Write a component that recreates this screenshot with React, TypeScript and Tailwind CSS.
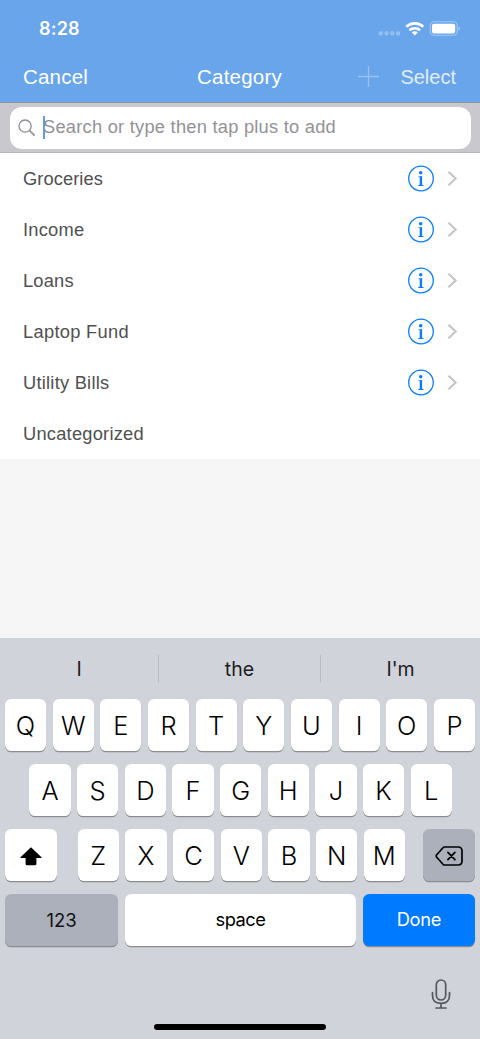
import React from "react";

const helv = "font-['Liberation_Sans',Arial,sans-serif]";
const sf = "font-['Inter',sans-serif]";

const categories = [
  { name: "Groceries", spacing: "tracking-[0.08px]", detail: true },
  { name: "Income", spacing: "tracking-[0.22px]", detail: true },
  { name: "Loans", spacing: "tracking-[0.2px]", detail: true },
  { name: "Laptop Fund", spacing: "tracking-[0.3px]", detail: true },
  { name: "Utility Bills", spacing: "tracking-[0.24px]", detail: true },
  { name: "Uncategorized", spacing: "tracking-[0.23px]", detail: false },
];

function StatusIcons() {
  return (
    <svg width="84" height="18" viewBox="378 20 84 18" fill="none">
      <g fill="#fff" fillOpacity="0.28">
        <rect x="378.6" y="31.2" width="4.2" height="4.2" rx="1.3" />
        <rect x="384.4" y="31.2" width="4.2" height="4.2" rx="1.3" />
        <rect x="390.2" y="31.2" width="4.2" height="4.2" rx="1.3" />
        <rect x="396" y="31.2" width="4.2" height="4.2" rx="1.3" />
      </g>
      <path d="M406.3 26.8A12.3 12.3 0 0 1 423.3 26.8" stroke="#fff" strokeWidth="2.7" />
      <path d="M409.5 30.3A7.8 7.8 0 0 1 420.1 30.3" stroke="#fff" strokeWidth="2.6" />
      <path d="M414.8 35.4L411.8 32.4A4.2 4.2 0 0 1 417.8 32.4Z" fill="#fff" />
      <rect x="430.3" y="21.8" width="26.9" height="13.4" rx="3.8" stroke="#fff" strokeOpacity="0.4" strokeWidth="1.1" />
      <rect x="432" y="23.7" width="23.2" height="9.9" rx="2" fill="#fff" />
      <path d="M458.6 26.5Q461.6 28.5 458.6 30.7Z" fill="#fff" fillOpacity="0.45" />
    </svg>
  );
}

function InfoIcon() {
  return (
    <svg width="28" height="27" viewBox="0 0.5 28 27" fill="none">
      <circle cx="14" cy="14" r="12.3" stroke="#087dff" strokeWidth="1.3" />
      <circle cx="13.7" cy="8.2" r="1.75" fill="#087dff" />
      <path d="M11.3 11.9L15.1 11.4V20.2L16.6 20.7V21.4H11.2V20.7L12.7 20.2V12.8L11.3 12.6Z" fill="#087dff" />
    </svg>
  );
}

type KeyProps = {
  children: React.ReactNode;
  size?: string;
  color?: string;
  text?: string;
};

function Key({
  children,
  size = "w-[41.2px]",
  color = "bg-white text-black",
  text = "pt-[2px] text-[25.5px] font-[350]",
}: KeyProps) {
  return (
    <button
      className={`flex h-[52px] shrink-0 items-center justify-center rounded-[6.4px] shadow-[0_1.3px_0_#8b8d91] ${size} ${color} ${text}`}
    >
      {children}
    </button>
  );
}

function Letters({ row }: { row: string }) {
  return (
    <div className="flex gap-[6.47px]">
      {row.split("").map((c) => (
        <Key key={c}>{c}</Key>
      ))}
    </div>
  );
}

export default function App() {
  return (
    <div className={`flex h-[1039px] w-[480px] flex-col overflow-hidden bg-[#f6f6f6] ${helv}`}>
      <header className="h-[103px] shrink-0 border-b border-[#8f9199] bg-[#69a5eb] text-white">
        <div className="flex h-[52px] items-start justify-between pr-[18px] pl-[39px]">
          <span className={`pt-[15px] text-[18px] leading-[28px] font-semibold tracking-[0.2px] ${sf}`}>8:28</span>
          <div className="pt-5">
            <StatusIcons />
          </div>
        </div>
        <div className="grid h-[50px] grid-cols-[1fr_auto_1fr] items-center px-[23px] text-[20.5px]">
          <button className="text-left tracking-[0.2px]">Cancel</button>
          <h1 className="-ml-px tracking-[0.2px]">Category</h1>
          <div className="flex items-center justify-end gap-[21px] pr-px">
            <svg className="-mt-px" width="21" height="21" viewBox="0 0 21 21" stroke="#fff" strokeOpacity="0.32" strokeWidth="1.3">
              <path d="M10.5 0V21M0 10.5H21" />
            </svg>
            <button className="text-[20px] text-white/80">Select</button>
          </div>
        </div>
      </header>

      <div className="h-[50px] shrink-0 border-b border-[#b7b7bb] bg-[#c9c8ce] px-[9.5px] pt-1">
        <div className="flex h-[41.5px] items-center rounded-[12px] bg-white pl-[8.5px]">
          <svg width="18" height="18" viewBox="0 0 18 18" fill="none" stroke="#8e8e93" strokeWidth="1.3">
            <circle cx="7.1" cy="7.1" r="6.1" />
            <path d="M11.5 11.5L16.7 16.7" strokeWidth="1.7" />
          </svg>
          <span className="-mt-px ml-[7px] h-[23px] w-[2px] bg-[#609de9]" />
          <span className="-mt-[2px] -ml-[2px] text-[18.3px] tracking-[0.24px] text-[#929296]">Search or type then tap plus to add</span>
        </div>
      </div>

      <ul className="shrink-0 bg-white">
        {categories.map((c) => (
          <li key={c.name} className="flex h-[51px] items-center pr-[22px] pl-[23px] text-[18.3px] text-[#505050]">
            <span className={`flex-1 ${c.spacing}`}>{c.name}</span>
            {c.detail && (
              <>
                <InfoIcon />
                <svg className="ml-[12px]" width="11" height="15" viewBox="0 0 11 15" fill="none" stroke="#c5c5c9" strokeWidth="2.2">
                  <path d="M1.5 0.8L8.6 7.5L1.5 14.2" />
                </svg>
              </>
            )}
          </li>
        ))}
      </ul>

      <section className={`mt-auto h-[401px] shrink-0 bg-[#d0d3d9] ${sf}`}>
        <div className="flex h-[61px] items-center text-[19.5px] text-[#1c1c1e]">
          <span className="w-[158px] pt-[2px] text-center">I</span>
          <span className="h-[28px] w-px bg-[#b9bcc1]" />
          <span className="w-[161px] pt-[2px] text-center">the</span>
          <span className="h-[28px] w-px bg-[#b9bcc1]" />
          <span className="flex-1 pt-[2px] text-center">I'm</span>
        </div>
        <div className="flex flex-col gap-[13px] px-[4.8px]">
          <div className="flex justify-center">
            <Letters row="QWERTYUIOP" />
          </div>
          <div className="flex pl-[24.6px]">
            <Letters row="ASDFGHJKL" />
          </div>
          <div className="flex">
            <Key size="w-[52.3px]">
              <svg width="22" height="19" viewBox="0 0 22 19">
                <path d="M11 0.2L21.5 10.2Q21.8 11 21 11H16.4V17Q16.4 18.3 15.1 18.3H6.9Q5.6 18.3 5.6 17V11H1Q0.2 11 0.5 10.2Z" fill="#000" />
              </svg>
            </Key>
            <div className="ml-[20.6px] flex-1">
              <Letters row="ZXCVBNM" />
            </div>
            <Key size="w-[52.3px]" color="bg-[#abb0ba] text-black">
              <svg width="28" height="20" viewBox="0 0 28 20" fill="none" stroke="#000" strokeWidth="1.7" strokeLinecap="round" strokeLinejoin="round">
                <path d="M9.5 1H23Q27 1 27 5V15Q27 19 23 19H9.5Q8.7 19 8 18.3L1.7 11.2Q0.7 10 1.7 8.8L8 1.7Q8.7 1 9.5 1Z" />
                <path d="M12.9 6.4L19.9 13.6M19.9 6.4L12.9 13.6" />
              </svg>
            </Key>
          </div>
          <div className="flex justify-between">
            <Key size="w-[113.6px]" color="bg-[#abb0ba] text-[#111111]" text="text-[18.5px] pt-[2px]">123</Key>
            <Key size="w-[231px]" text="text-[18.3px] tracking-[-0.5px] pb-[1px]">space</Key>
            <Key size="w-[112.6px]" color="bg-[#007aff] text-white" text="text-[18.3px] tracking-[-0.3px] pb-[1px]">Done</Key>
          </div>
        </div>
        <div className="flex h-[78px] items-start justify-end pt-[33px] pr-[29px]">
          <svg width="20" height="31" viewBox="0 0 20 31" fill="none" stroke="#55585d" strokeWidth="1.7" strokeLinecap="round">
            <rect x="5.3" y="1" width="9.4" height="20" rx="4.7" />
            <path d="M1.5 13.5V16.5Q1.5 24.3 10 24.3Q18.5 24.3 18.5 16.5V13.5M10 24.3V29M5 29H15" />
          </svg>
        </div>
        <div className="mx-auto h-[6px] w-[172px] rounded-full bg-black" />
      </section>
    </div>
  );
}
